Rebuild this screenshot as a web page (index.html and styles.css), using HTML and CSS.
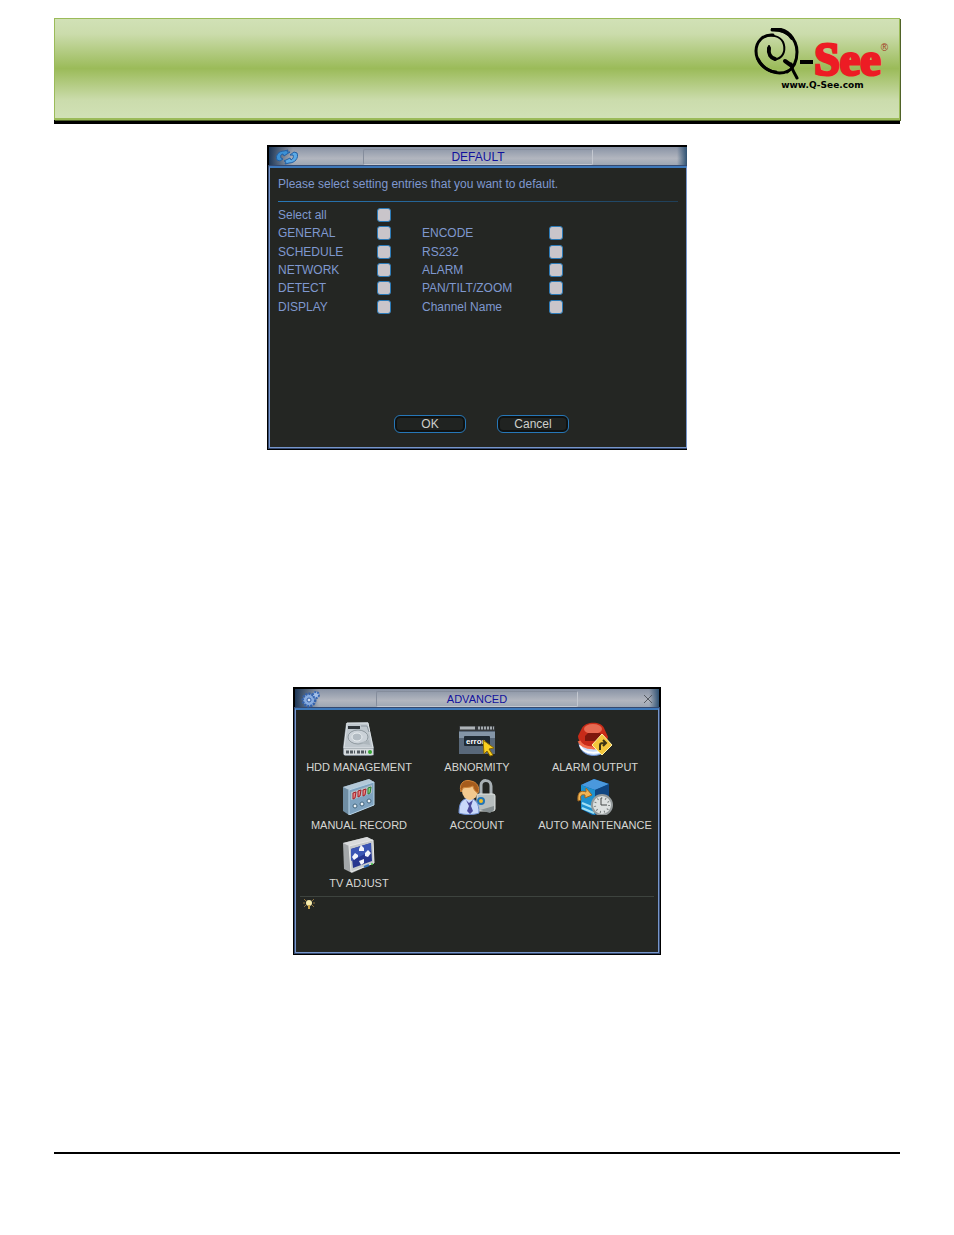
FILE: index.html
```html
<!DOCTYPE html>
<html lang="en">
<head>
  <meta charset="UTF-8">
  <title>Q-See | Default and Advanced menus</title>
  <meta name="viewport" content="width=device-width, initial-scale=1.0">
  <link rel="stylesheet" href="styles.css">
</head>
<body>
  <header class="banner">
    <a class="logo" href="#">
      <span class="logo-top">
        <svg class="logo-mark" width="64" height="52" viewBox="-4 0 64 52" aria-hidden="true">
          <g fill="none" stroke="#000" stroke-linecap="round">
            <path d="M15 18C14 27 18 32 23 31C30 29 32 21 29 14C26 8 17 6 10 9" stroke-width="2"/>
            <path d="M15 20C14 26 17 30 21 31" stroke-width="4"/>
            <path d="M19 7C9 6 2 14 2 23C2 34 11 43 22 44" stroke-width="3"/>
            <path d="M4 31C10 43 24 48 34 43" stroke-width="3"/>
            <path d="M18 2C32 1 43 10 43 24C43 34 40 40 33 44" stroke-width="3"/>
            <path d="M19 1C27 1 34 4 38 10" stroke-width="4"/>
            <path d="M31 33L38 38" stroke-width="4"/>
            <path d="M37 36C38 42 41 46 43 50" stroke-width="3"/>
          </g>
          <path d="M46 32H59V36H46Z"/>
        </svg>
        <span class="logo-name">See</span>
        <span class="logo-reg">®</span>
      </span>
      <span class="logo-url">www.Q-See.com</span>
    </a>
  </header>

  <main>
    <form class="window window-default">
      <div class="titlebar">
        <svg width="24" height="16" viewBox="0 0 24 16" aria-hidden="true">
          <path d="M2 11C0 6 4 2 9 2L13 1L12 3L15 3L9 7L8 5C6 5 5 7 6 9L8 10L5 12Z" fill="#3b91d6" stroke="#2260a4"/>
          <path d="M22 4C24 9 20 14 14 14L10 15L11 13L9 12L15 9L16 11C18 10 19 8 18 6L15 6L19 3Z" fill="#5baae6" stroke="#2260a4"/>
        </svg>
        <h2>DEFAULT</h2>
      </div>
      <div class="content">
        <p class="hint">Please select setting entries that you want to default.</p>
        <div class="entries">
          <label for="all">Select all</label>
          <input type="checkbox" id="all">
          <label class="row-start" for="general">GENERAL</label>
          <input type="checkbox" id="general">
          <label for="encode">ENCODE</label>
          <input type="checkbox" id="encode">
          <label for="schedule">SCHEDULE</label>
          <input type="checkbox" id="schedule">
          <label for="rs232">RS232</label>
          <input type="checkbox" id="rs232">
          <label for="network">NETWORK</label>
          <input type="checkbox" id="network">
          <label for="alarm">ALARM</label>
          <input type="checkbox" id="alarm">
          <label for="detect">DETECT</label>
          <input type="checkbox" id="detect">
          <label for="ptz">PAN/TILT/ZOOM</label>
          <input type="checkbox" id="ptz">
          <label for="display">DISPLAY</label>
          <input type="checkbox" id="display">
          <label for="channel">Channel Name</label>
          <input type="checkbox" id="channel">
        </div>
        <div class="actions">
          <button type="button">OK</button>
          <button type="button">Cancel</button>
        </div>
      </div>
    </form>

    <section class="window window-advanced">
      <div class="titlebar">
        <svg width="20" height="18" viewBox="0 0 20 18" aria-hidden="true">
          <circle cx="8" cy="10" r="6" fill="#88ace0" stroke="#3462ac" stroke-width="3" stroke-dasharray="2 1"/>
          <circle cx="8" cy="10" r="5" fill="#88ace0"/>
          <circle cx="8" cy="10" r="2" fill="#d4e0f2" stroke="#2d5ba8"/>
          <circle cx="15" cy="5" r="3" fill="#a5c0e8" stroke="#3a69b4" stroke-width="2" stroke-dasharray="2 1"/>
        </svg>
        <h2>ADVANCED</h2>
        <button class="close" type="button" aria-label="Close">
          <svg width="10" height="10" viewBox="0 0 10 10"><path d="M1 1L9 9M9 1L1 9" stroke="#555a62"/></svg>
        </button>
      </div>
      <div class="content">
        <div class="menu">
          <button type="button">
            <svg viewBox="0 0 36 36" aria-hidden="true">
              <path d="M5 2L27 1L33 27V34L30 35H4L2 33V26Z" fill="#7d868e"/>
              <path d="M6 2H27L32 27H3Z" fill="#bfc7cd" stroke="#e0e5e8"/>
              <path d="M7 5H19V8H7Z" fill="#30363b"/>
              <path d="M20 5H26L28 11" fill="none" stroke="#8c969f"/>
              <ellipse cx="17" cy="16" rx="10" ry="7" fill="#cbd2d8" stroke="#8f999f"/>
              <ellipse cx="16" cy="16" rx="5" ry="4" fill="#b3bcc3" stroke="#e9eef0"/>
              <path d="M18 22L28 19L29 24Z" fill="#aeb7bd"/>
              <path d="M3 28H32V34H3Z" fill="#d5dadd"/>
              <path d="M5 31H14M16 31H25" stroke="#51595f" stroke-width="3" stroke-dasharray="3 1"/>
              <circle cx="29" cy="31" r="2" fill="#35a532"/>
            </svg>
            <span>HDD MANAGEMENT</span>
          </button>
          <button type="button">
            <svg viewBox="0 0 38 36" aria-hidden="true">
              <path d="M1 5H37V33H1Z" fill="#596879"/>
              <path d="M1 5H37V10H1Z" fill="#35383b"/>
              <path d="M2 7H17" stroke="#aeb4b8" stroke-width="3"/>
              <path d="M20 7H36" stroke="#a4aaae" stroke-width="3" stroke-dasharray="2 1"/>
              <path d="M1 11H37V17H1Z" fill="#8495a7"/>
              <rect x="6" y="15" width="26" height="10" rx="1" fill="#202a33"/>
              <text class="icon-error" x="8" y="23">error</text>
              <path d="M25 19L36 27L31 28L35 34L32 35L29 30L26 33Z" fill="#f8cf20" stroke="#896600"/>
            </svg>
            <span>ABNORMITY</span>
          </button>
          <button type="button">
            <svg viewBox="0 0 36 36" aria-hidden="true">
              <path d="M2 22C3 38 29 39 31 23Z" fill="#c8dcfa" stroke="#668dce"/>
              <path d="M3 24C6 34 25 34 30 25" fill="none" stroke="#fff" stroke-width="2"/>
              <path d="M1 15C1 28 28 32 31 16L27 7C24 0 9 0 5 7Z" fill="#c82b18"/>
              <path d="M2 20C6 29 25 29 30 21" fill="none" stroke="#f36c4a" stroke-width="3"/>
              <ellipse cx="16" cy="8" rx="9" ry="5" fill="#e86a52"/>
              <path d="M8 15L11 12H23L25 16V20H8Z" fill="#7e170d"/>
              <path d="M25 13L35 24L25 34L15 24Z" fill="#f3c63c" stroke="#fff0a5"/>
              <path d="M23 29V24C23 22 25 22 28 22M26 19L29 22L26 25" fill="none" stroke="#3b3315" stroke-width="2"/>
            </svg>
            <span>ALARM OUTPUT</span>
          </button>
          <button type="button">
            <svg viewBox="0 0 36 36" aria-hidden="true">
              <path d="M2 8L28 0L33 3V26L8 36L2 32Z" fill="#6f8da3"/>
              <path d="M2 8L28 0L33 3L8 11Z" fill="#b4c8d7"/>
              <path d="M8 11L33 3V26L8 36Z" fill="#7fa3c0" stroke="#b9d4e6"/>
              <path d="M10 13L31 6V14L10 21Z" fill="#b1bcc4"/>
              <path d="M12 14L15 13L14 19L12 20ZM17 12L20 11L19 17L17 18ZM22 11L25 10L24 16L22 17Z" fill="#ed8a89" stroke="#a51d25"/>
              <path d="M27 9L30 8L29 14L27 15Z" fill="#87d47e" stroke="#287e38"/>
              <g fill="#edf3f6" stroke="#42647d">
                <circle cx="14" cy="27" r="2"/>
                <circle cx="21" cy="25" r="2"/>
                <circle cx="28" cy="22" r="2"/>
              </g>
            </svg>
            <span>MANUAL RECORD</span>
          </button>
          <button type="button">
            <svg viewBox="0 0 38 36" aria-hidden="true">
              <path d="M23 16V6C23 0 33 0 33 7V16" fill="none" stroke="#a9b1b5" stroke-width="3"/>
              <rect x="19" y="15" width="18" height="17" rx="2" fill="#b7bebe" stroke="#e1e5e3"/>
              <path d="M22 31L36 27V31L32 34Z" fill="#858e90"/>
              <circle cx="23" cy="22" r="4" fill="#2174b6"/>
              <circle cx="23" cy="22" r="2" fill="#f0bd28"/>
              <path d="M1 34C1 25 3 20 11 19C18 20 21 24 21 34C16 36 6 36 1 34Z" fill="#c9d9fa" stroke="#6d8dce"/>
              <path d="M8 21L11 24L15 21L13 27L15 32L12 35L9 32L11 27Z" fill="#4c4b9c"/>
              <ellipse cx="12" cy="12" rx="8" ry="9" fill="#f2c98f"/>
              <path d="M3 13C0 3 8 0 13 2C19 3 22 8 20 14C17 13 15 9 15 7C12 9 7 8 5 9Z" fill="#a65c1c" stroke="#cf8439"/>
            </svg>
            <span>ACCOUNT</span>
          </button>
          <button type="button">
            <svg viewBox="0 0 36 36" aria-hidden="true">
              <path d="M4 6L17 0L32 5V28L17 37L4 30Z" fill="#105b9d"/>
              <path d="M4 6L17 0L32 5L18 11Z" fill="#4a98dd"/>
              <path d="M4 6L18 11V36L4 30Z" fill="#1d91cf"/>
              <path d="M18 11L32 5V28L18 36Z" fill="#104682"/>
              <path d="M5 24L17 29M5 29L17 34" stroke="#a0e0f5" stroke-width="2"/>
              <path d="M1 22C0 13 4 11 9 13L9 9L15 16L8 19L8 16C4 15 3 17 4 21Z" fill="#f2b554" stroke="#9c6620"/>
              <circle cx="25" cy="26" r="10" fill="#dce0e0" stroke="#949a9b" stroke-width="2"/>
              <circle cx="25" cy="26" r="7" fill="none" stroke="#777d7d" stroke-width="2" stroke-dasharray="1 3"/>
              <path d="M24 19V26H30" fill="none" stroke="#444948"/>
            </svg>
            <span>AUTO MAINTENANCE</span>
          </button>
          <button type="button">
            <svg viewBox="0 0 36 36" aria-hidden="true">
              <path d="M2 6L26 0L32 3L33 26L11 36L3 32Z" fill="#a3a7a9"/>
              <path d="M2 6L26 0L32 3L8 9Z" fill="#d9dbdc"/>
              <path d="M8 9L32 3L33 26L10 35Z" fill="#c5c9cb" stroke="#e8e9e9"/>
              <path d="M10 12L30 6L31 24L12 31Z" fill="#26358f"/>
              <path d="M10 12L30 6V14L10 24Z" fill="#3a55b4"/>
              <path d="M20 8L23 11V14H18V12ZM11 20L14 16L17 18V20L13 23ZM24 16L27 13L30 16L27 20L24 19ZM18 24L23 22V26L20 28Z" fill="#f2f4fb"/>
              <path d="M23 30L28 28" stroke="#336fba" stroke-width="2"/>
              <circle cx="31" cy="27" r="1" fill="#3dc542"/>
            </svg>
            <span>TV ADJUST</span>
          </button>
        </div>
        <div class="tip">
          <svg width="12" height="12" viewBox="0 0 12 12" aria-hidden="true">
            <path d="M1 1L3 3M11 1L9 3M0 5H2M10 5H12M1 9L3 7M11 9L9 7" stroke="#8c713c"/>
            <circle cx="6" cy="5" r="3" fill="#f8edad"/>
            <path d="M5 7H7V11H5Z" fill="#c9a44b"/>
          </svg>
        </div>
      </div>
    </section>
  </main>

  <footer></footer>
</body>
</html>
```
FILE: styles.css
```css
* {
  box-sizing: border-box;
}
body {
  display: flex;
  flex-direction: column;
  min-height: 100vh;
  margin: 0;
  padding: 18px 54px 81px;
  background: #fff;
  font-family: "Liberation Sans", Arial, sans-serif;
}
button {
  font: inherit;
  cursor: pointer;
}

/* banner */
.banner {
  display: flex;
  justify-content: flex-end;
  padding: 9px 11px 27px 0;
  border: 1px solid #9bbb59;
  border-bottom-width: 2px;
  background: linear-gradient(#d1e1b6 0%, #cbdcac 15%, #9bbb59 50%, #cbdcac 82%, #d1e1b6 100%);
  box-shadow: 1px 1px 0 #4f6228, 0 4px 0 #000;
}
.logo {
  color: #000;
  text-decoration: none;
}
.logo-top {
  display: flex;
  height: 51px;
}
.logo-mark {
  flex: none;
}
.logo-name {
  padding-top: 13px;
  color: #ed1c24;
  font-family: "Liberation Serif", serif;
  font-size: 46px;
  font-weight: bold;
  line-height: 38px;
  -webkit-text-stroke: 3px #ed1c24;
}
.logo-reg {
  color: #a33b24;
  font-size: 10px;
  line-height: 40px;
}
.logo-url {
  display: block;
  padding-left: 31px;
  font-family: "DejaVu Sans", sans-serif;
  font-size: 9px;
  font-weight: bold;
  line-height: 12px;
}

/* device windows */
main {
  flex: 1;
}
.window {
  margin: 0 auto;
  padding: 2px;
  overflow: hidden;
  background: #000;
}
.window-default {
  max-width: 420px;
  margin-top: 25px;
  padding-right: 0;
  color: #7f98cf;
  font-size: 12px;
}
.window-advanced {
  max-width: 368px;
  margin-top: 237px;
  color: #d6d7d4;
  font-size: 11px;
}
.titlebar {
  display: grid;
  grid-template-columns: 1fr auto 1fr;
  align-items: center;
  height: 19px;
  padding: 0 6px;
  background:
    linear-gradient(90deg, #1d3656, transparent 24px, transparent calc(100% - 10px), #2f5273),
    linear-gradient(#8993a5, #b2b6bf 60%, #9aa4b2);
}
.titlebar h2 {
  width: 230px;
  height: 16px;
  margin: 0;
  border: 1px solid #858d9c;
  border-right-color: #c4c8d0;
  border-bottom-color: #c4c8d0;
  border-radius: 2px;
  color: #11119c;
  font-size: 12px;
  font-weight: normal;
  line-height: 15px;
  text-align: center;
}
.window-advanced .titlebar h2 {
  width: 202px;
  font-size: 11px;
}
.close {
  justify-self: end;
  display: flex;
  padding: 0;
  border: none;
  background: none;
}
.content {
  border: 1px solid #7796cb;
  border-top: 2px solid #3d78ba;
  background: #242623;
  box-shadow: 0 0 0 1px #35496f;
}

/* default */
.window-default .content {
  padding: 7px 8px 14px;
}
.hint {
  margin: 0 0 4px;
  padding-bottom: 9px;
  background: linear-gradient(90deg, #2878b8, #203f58) bottom / 100% 1px no-repeat;
  line-height: 18px;
}
.entries {
  display: grid;
  grid-template-columns: 99px 45px 127px 14px;
  grid-template-rows: repeat(6, 1fr);
  align-items: center;
  height: 110px;
}
.row-start {
  grid-column: 1;
}
.entries input {
  appearance: none;
  width: 14px;
  height: 14px;
  margin: 0;
  border: 1px solid #2c7bb8;
  border-radius: 3px;
  background: #c9c5ca;
}
.entries input:checked {
  background: #2c7bb8;
}
.actions {
  display: flex;
  justify-content: center;
  gap: 31px;
  margin-top: 99px;
  padding-left: 7px;
}
.actions button {
  width: 72px;
  height: 18px;
  padding: 0;
  border: 1px solid #2677b8;
  border-radius: 6px;
  background: #202321;
  box-shadow: inset 0 0 0 2px #101211;
  color: #cfd0cc;
  font-size: 12px;
}

/* advanced */
.window-advanced .content {
  padding: 11px 4px 0;
}
.menu {
  display: grid;
  grid-template-columns: repeat(3, 1fr);
  row-gap: 4px;
}
.menu button {
  display: flex;
  flex-direction: column;
  align-items: center;
  padding: 0;
  border: none;
  background: none;
  color: inherit;
  line-height: 16px;
  white-space: nowrap;
}
.menu svg {
  height: 36px;
}
.menu span {
  padding-top: 2px;
}
.icon-error {
  fill: #fff;
  font-size: 8px;
  font-weight: bold;
}
.tip {
  height: 56px;
  margin-top: 5px;
  padding: 1px 3px;
  border-top: 1px solid #3d433e;
}

footer {
  border-top: 2px solid #000;
}
```
